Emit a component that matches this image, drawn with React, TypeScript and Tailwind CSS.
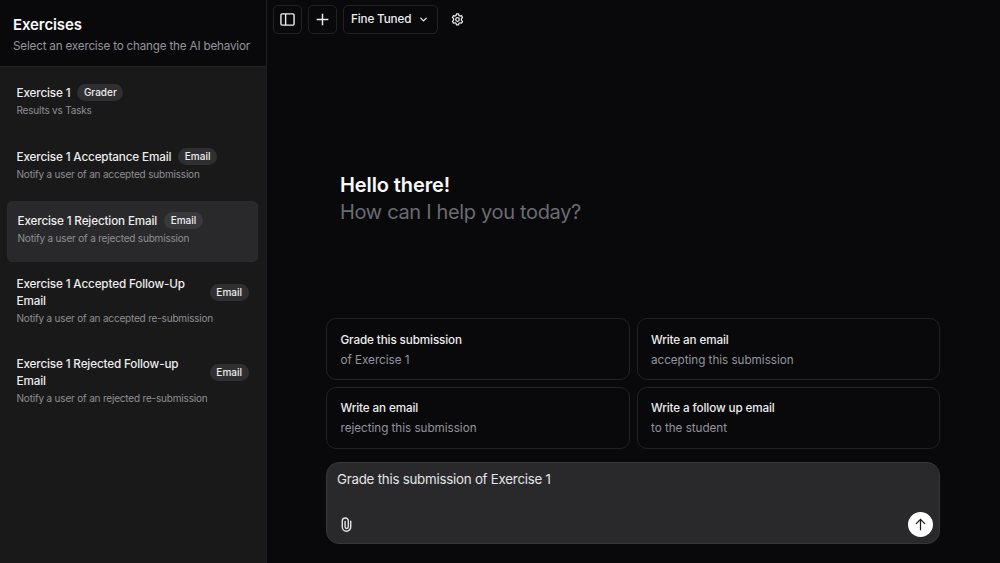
import type { ReactNode } from "react";
import { ChevronDown } from "lucide-react";

type Exercise = {
  title: string;
  tag: string;
  description: string;
  selected?: boolean;
};

const EXERCISES: Exercise[] = [
  { title: "Exercise 1", tag: "Grader", description: "Results vs Tasks" },
  {
    title: "Exercise 1 Acceptance Email",
    tag: "Email",
    description: "Notify a user of an accepted submission",
  },
  {
    title: "Exercise 1 Rejection Email",
    tag: "Email",
    description: "Notify a user of a rejected submission",
    selected: true,
  },
  {
    title: "Exercise 1 Accepted Follow-Up Email",
    tag: "Email",
    description: "Notify a user of an accepted re-submission",
  },
  {
    title: "Exercise 1 Rejected Follow-up Email",
    tag: "Email",
    description: "Notify a user of an rejected re-submission",
  },
];

const SUGGESTIONS = [
  { title: "Grade this submission", label: "of Exercise 1" },
  { title: "Write an email", label: "accepting this submission" },
  { title: "Write an email", label: "rejecting this submission" },
  { title: "Write a follow up email", label: "to the student" },
];

function Icon({ size, children }: { size: number; children: ReactNode }) {
  return (
    <svg
      width={size}
      height={size}
      viewBox="0 0 16 16"
      fill="none"
      stroke="currentColor"
      strokeWidth={1.5}
    >
      {children}
    </svg>
  );
}

function ToolbarButton({ children }: { children: ReactNode }) {
  return (
    <button className="flex h-[29px] w-[29px] items-center justify-center rounded-[5px] border border-[#222225]">
      {children}
    </button>
  );
}

function ExerciseItem({ title, tag, description, selected }: Exercise) {
  return (
    <div
      className={
        selected
          ? "rounded-[5px] border border-[#2b2b2d] bg-[#29292b] px-[9.5px] pt-2.5 pb-4"
          : "rounded-[5px] border border-transparent px-[8.5px] pt-2.5 pb-4"
      }
    >
      <div className="flex items-center gap-[7px]">
        <h3 className="text-[11.7px] leading-[16.4px] font-medium tracking-[-0.14px] text-[#ededee]">
          {title}
        </h3>
        <span
          className={
            selected
              ? "shrink-0 rounded-full bg-[#39393b] px-[6.5px] text-[10px] leading-[17px] font-medium text-[#ededee]"
              : "shrink-0 rounded-full bg-[#2f2f32] px-[6.5px] text-[10px] leading-[17px] font-medium text-[#ededee]"
          }
        >
          {tag}
        </span>
      </div>
      <p className="mt-0.5 text-[10px] leading-[14px] tracking-[-0.19px] text-[#8f8f94]">
        {description}
      </p>
    </div>
  );
}

export default function App() {
  return (
    <div className="flex h-[563px] w-[1000px] overflow-hidden bg-[#09090b] font-['Inter',sans-serif] text-[#fafafa]">
      <aside className="flex w-[267px] shrink-0 flex-col border-r border-[#1d1d20] bg-[#19191a]">
        <header className="h-[67px] border-b border-[#222225] bg-[#09090b] pt-[15px] pl-[13px]">
          <h2 className="text-[15px] leading-5 font-semibold tracking-[-0.1px]">
            Exercises
          </h2>
          <p className="pt-px text-[11.7px] leading-5 tracking-[-0.2px] whitespace-nowrap text-[#93939b]">
            Select an exercise to change the AI behavior
          </p>
        </header>
        <div className="flex flex-col gap-[3px] pt-[6.4px] pr-2 pl-[7px]">
          {EXERCISES.map((exercise) => (
            <ExerciseItem key={exercise.title} {...exercise} />
          ))}
        </div>
      </aside>

      <main className="flex flex-1 flex-col">
        <div className="flex items-center gap-1.5 px-1.5 pt-[5px] text-[#ededee]">
          <ToolbarButton>
            <Icon size={15}>
              <rect x="1" y="2" width="14" height="12" rx="1.2" />
              <path d="M6 2v12" />
            </Icon>
          </ToolbarButton>
          <ToolbarButton>
            <Icon size={13}>
              <path strokeWidth={1.8} d="M8 .8v14.400M.8 8h14.400" />
            </Icon>
          </ToolbarButton>
          <button className="flex h-[29px] w-[95px] items-center justify-between rounded-[5px] border border-[#222225] pr-2 pl-[7px] text-[11.7px] font-medium tracking-[-0.15px]">
            Fine Tuned
            <ChevronDown size={11} strokeWidth={2.8} />
          </button>
          <button className="flex h-[29px] w-[26px] items-center justify-center">
            <Icon size={13}>
              <path
                strokeLinejoin="round"
                d="M6.700 1.200h2.600l.5 1.900 1.200.7 1.900-.5 1.300 2.200-1.400 1.400v1.900l1.400 1.500-1.300 2.200-1.900-.5-1.200.7-.5 1.900H6.700l-.5-1.900-1.200-.7-1.900.5-1.300-2.200 1.400-1.500V6.900L1.800 5.500l1.300-2.200 1.900.5 1.200-.7z"
              />
              <circle cx="8" cy="8" r="2.2" />
            </Icon>
          </button>
        </div>

        <div className="mt-[138px] ml-[73px] text-[20px] leading-[27px]">
          <p className="font-semibold tracking-[-0.1px]">Hello there!</p>
          <p className="tracking-[-0.33px] text-[#6b6b73]">
            How can I help you today?
          </p>
        </div>

        <div className="mt-auto mb-[19px] ml-[59px] flex w-[614px] flex-col gap-[13px]">
          <div className="grid grid-cols-2 gap-[7px]">
            {SUGGESTIONS.map(({ title, label }) => (
              <button
                key={title + label}
                className="flex h-[62px] flex-col rounded-[10px] border border-[#222225] px-[13.5px] pt-[11px] text-left text-[11.7px] leading-5 nth-[n+3]:pt-2.5"
              >
                <span className="font-medium tracking-[-0.12px] text-[#ededee]">
                  {title}
                </span>
                <span className="tracking-[-0.03px] text-[#93939b]">
                  {label}
                </span>
              </button>
            ))}
          </div>
          <div className="flex h-[82px] flex-col justify-between rounded-[13px] border border-[#37373a] bg-[#29292b] pt-1.5 pr-1.5 pb-1.5 pl-2.5">
            <p className="text-[13.3px] leading-5 tracking-[-0.23px] text-[#e4e4e6]">
              Grade this submission of Exercise 1
            </p>
            <div className="flex items-center justify-between">
              <button className="ml-[1.5px] text-[#e4e4e6]">
                <Icon size={15}>
                  <path
                    strokeLinecap="round"
                    d="M12.500 4.500v6.200a4.500 4.500 0 0 1-9 0V4.200a3.200 3.200 0 0 1 6.400 0v6.300a1.700 1.700 0 0 1-3.400 0V4.800"
                  />
                </Icon>
              </button>
              <button className="flex size-[25px] items-center justify-center rounded-full bg-white text-[#18181b]">
                <Icon size={13}>
                  <path d="M8 15V2M2.500 7.200 8 1.700l5.500 5.500" />
                </Icon>
              </button>
            </div>
          </div>
        </div>
      </main>
    </div>
  );
}
